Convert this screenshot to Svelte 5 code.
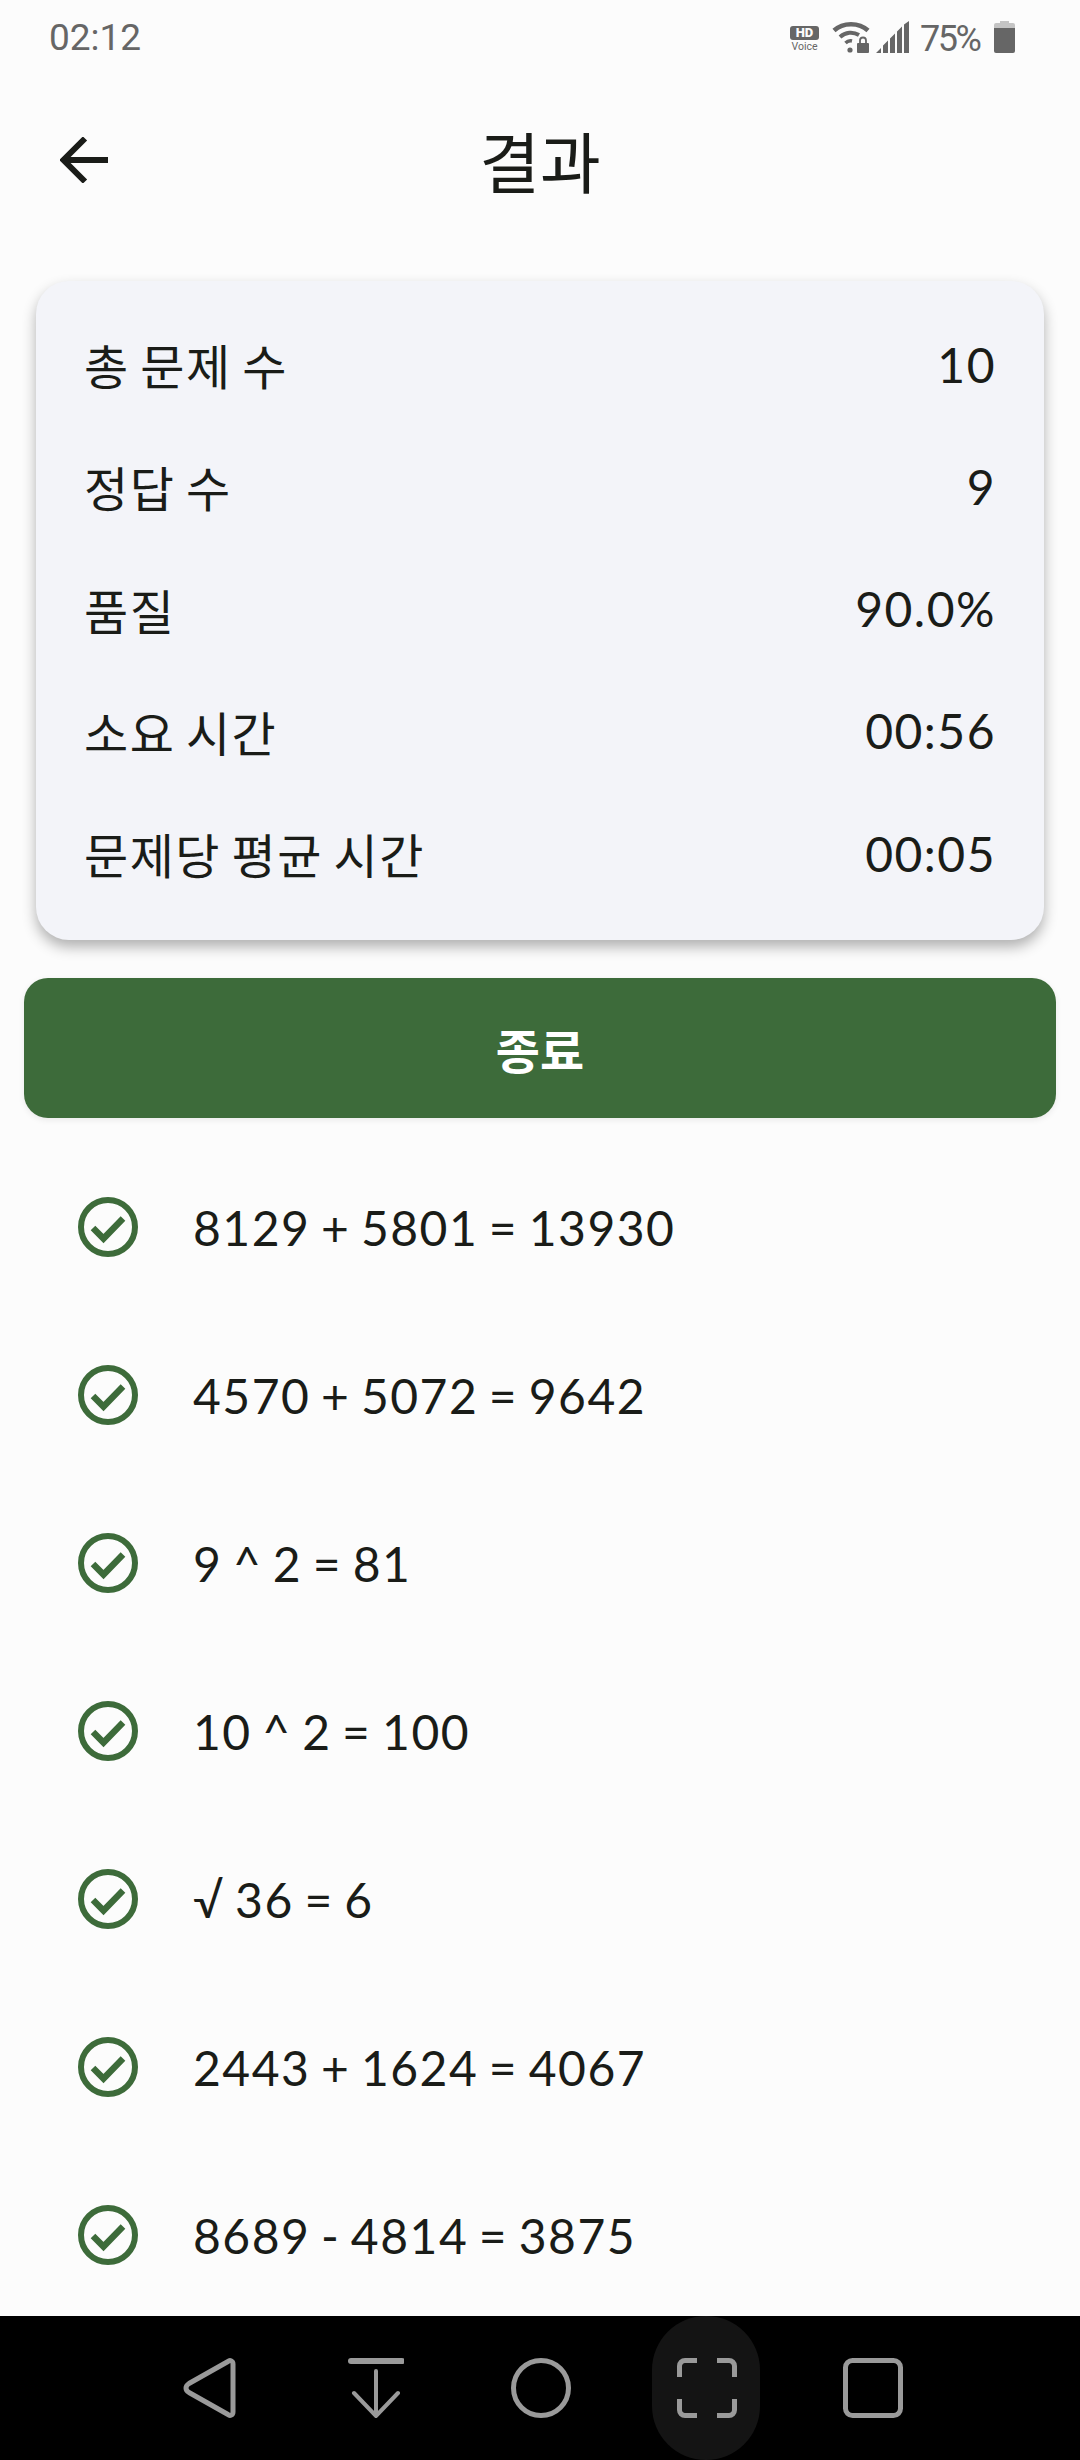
<script>
  const stats = [
    ['총 문제 수', '10'],
    ['정답 수', '9'],
    ['품질', '90.0%'],
    ['소요 시간', '00:56'],
    ['문제당 평균 시간', '00:05']
  ];
  const items = [
    '8129 + 5801 = 13930',
    '4570 + 5072 = 9642',
    '9 ^ 2 = 81',
    '10 ^ 2 = 100',
    '√ 36 = 6',
    '2443 + 1624 = 4067',
    '8689 - 4814 = 3875'
  ];
</script>

<div class="screen">
  <div class="status">
    <span class="time">02:12</span>
    <div class="sysicons">
      <div class="hd"><span class="hdbadge">HD</span><span class="voice">Voice</span></div>
      <svg class="wifi" width="38" height="32" viewBox="0 0 38 32">
        <path d="M2 9.500C11 1 27 1 36 9.500" fill="none" stroke="#666" stroke-width="4.500"/>
        <path d="M8 16C13.500 11 21 10.500 27 14" fill="none" stroke="#666" stroke-width="4"/>
        <path d="M13.500 22C15.500 20 18 19.500 20 20" fill="none" stroke="#666" stroke-width="3.500"/>
        <circle cx="18" cy="29" r="2.600" fill="#666"/>
        <rect x="25" y="22" width="12" height="10" rx="1" fill="#666"/>
        <path d="M28 22v-2.500a3 3 0 0 1 6 0V22" fill="none" stroke="#666" stroke-width="1.800"/>
      </svg>
      <svg class="signal" width="33" height="32" viewBox="0 0 33 32">
        <path d="M0 32L5 27V32Z M7 32V24.500L12 19.500V32Z M14 32V17.500L19 12.500V32Z M21 32V10.500L26 5.500V32Z M28 32V3.500L33 0V32Z" fill="#666"/>
      </svg>
      <span class="pct">75%</span>
      <svg class="batt" width="21" height="32" viewBox="0 0 21 32">
        <path d="M6 0H15V2H19A2 2 0 0 1 21 4V7H0V4A2 2 0 0 1 2 2H6Z" fill="#c4c4c4"/>
        <path d="M0 7H21V30A2 2 0 0 1 19 32H2A2 2 0 0 1 0 30Z" fill="#666"/>
      </svg>
    </div>
  </div>

  <header class="appbar">
    <svg class="back" width="48" height="46" viewBox="0 0 48 46">
      <path d="M48 23H4M25 1.500L3.500 23L25 44.500" fill="none" stroke="#1a1c18" stroke-width="6"/>
    </svg>
    <h1>결과</h1>
  </header>

  <section class="card">
    {#each stats as [label, value]}
      <div class="stat"><span>{label}</span><span>{value}</span></div>
    {/each}
  </section>

  <button class="finish">종료</button>

  <ul class="list">
    {#each items as item}
      <li>
        <svg width="60" height="60" viewBox="0 0 60 60">
          <circle cx="30" cy="30" r="27" fill="none" stroke="#3d6b3a" stroke-width="6"/>
          <path d="M15 31L25.500 41.500L45 21.500" fill="none" stroke="#3d6b3a" stroke-width="6.500"/>
        </svg>
        <span>{item}</span>
      </li>
    {/each}
  </ul>

  <nav class="nav">
    <div class="slot">
      <svg width="60" height="60" viewBox="0 0 60 60">
        <path d="M55 6C55 3 52 1.500 50 3.500L11 25.500C7 28 7 32 11 34.500L50 56.500C52 58.500 55 57 55 54Z" fill="none" stroke="#9a9a9a" stroke-width="5" stroke-linejoin="round"/>
      </svg>
    </div>
    <div class="slot">
      <svg width="60" height="60" viewBox="0 0 60 60">
        <path d="M7 3H58" fill="none" stroke="#9a9a9a" stroke-width="6" stroke-linecap="round"/>
        <path d="M32 13V57M10 35L32 58L54 35" fill="none" stroke="#9a9a9a" stroke-width="4" stroke-linecap="round"/>
      </svg>
    </div>
    <div class="slot">
      <svg width="60" height="60" viewBox="0 0 60 60" class="shift">
        <circle cx="30" cy="30" r="27.500" fill="none" stroke="#9a9a9a" stroke-width="5"/>
      </svg>
    </div>
    <div class="slot active">
      <svg width="60" height="60" viewBox="0 0 60 60" class="shift">
        <path d="M20 2.500H8A5.500 5.500 0 0 0 2.500 8V19M40 2.500H52A5.500 5.500 0 0 1 57.500 8V19M20 57.500H8A5.500 5.500 0 0 1 2.500 52V41M40 57.500H52A5.500 5.500 0 0 0 57.500 52V41" fill="none" stroke="#9a9a9a" stroke-width="5"/>
      </svg>
    </div>
    <div class="slot">
      <svg width="60" height="60" viewBox="0 0 60 60" class="shift">
        <rect x="2.500" y="2.500" width="55" height="55" rx="7" fill="none" stroke="#9a9a9a" stroke-width="5"/>
      </svg>
    </div>
  </nav>
</div>

<style>
  :global(body) {
    margin: 0;
    background: #fcfcfc;
  }
  .screen {
    width: 1080px;
    height: 2460px;
    display: flex;
    flex-direction: column;
    overflow: hidden;
    background: #fcfcfc;
    color: #1a1c18;
    font-family: Lato, "Noto Sans CJK KR", sans-serif;
  }
  .status {
    height: 78px;
    flex: none;
    display: flex;
    justify-content: space-between;
    align-items: flex-start;
    padding: 16px 65px 0 49px;
    box-sizing: border-box;
    font-family: Roboto, sans-serif;
    color: #666;
  }
  .time {
    font-size: 37px;
    line-height: 44px;
  }
  .sysicons {
    display: flex;
    align-items: flex-start;
    margin-top: 5px;
  }
  .hd {
    width: 29px;
    margin-top: 5px;
    margin-right: 13px;
    display: flex;
    flex-direction: column;
    align-items: center;
  }
  .hdbadge {
    width: 29px;
    height: 14px;
    border-radius: 3px;
    background: #666;
    color: #fcfcfc;
    font-size: 13px;
    line-height: 14px;
    font-weight: 900;
    text-align: center;
  }
  .voice {
    font-size: 10.500px;
    line-height: 12px;
    margin-top: 1px;
  }
  .wifi { margin-right: 6px; }
  .signal { margin-right: 11px; }
  .pct {
    width: 60px;
    margin-right: 14px;
    font-size: 36px;
    line-height: 36px;
    letter-spacing: -2.500px;
    white-space: nowrap;
  }
  .appbar {
    position: relative;
    flex: none;
    height: 112px;
    margin-top: 26px;
    display: flex;
    align-items: center;
    justify-content: center;
  }
  .back {
    position: absolute;
    left: 60px;
    top: 33px;
  }
  h1 {
    margin: 6px 0 0;
    font-size: 66px;
    font-weight: 400;
    line-height: 106px;
  }
  .card {
    flex: none;
    margin: 65px 36px 0;
    padding: 22px 48px 26px 48px;
    height: 659px;
    box-sizing: border-box;
    border-radius: 33px;
    background: #f3f4f9;
    box-shadow: 0 7px 14px rgba(0, 0, 0, 0.3);
    display: flex;
    flex-direction: column;
    justify-content: space-between;
  }
  .stat {
    display: flex;
    justify-content: space-between;
    align-items: center;
    height: 122px;
    font-size: 48px;
    letter-spacing: 1.500px;
    word-spacing: -3.200px;
  }
  .finish {
    flex: none;
    display: block;
    margin: 38px 24px 0;
    width: 1032px;
    height: 140px;
    border: 0;
    padding: 0;
    border-radius: 24px;
    background: #3d6b3a;
    color: #fff;
    font-family: inherit;
    font-size: 48px;
    font-weight: 700;
    box-shadow: 0 2px 6px rgba(0, 0, 0, 0.08);
  }
  .list {
    flex: 1;
    min-height: 0;
    overflow: hidden;
    list-style: none;
    margin: 25px 0 0;
    padding: 0;
  }
  .list li {
    height: 168px;
    display: flex;
    align-items: center;
    padding-left: 78px;
    gap: 55px;
    font-size: 48px;
    letter-spacing: 1.500px;
    word-spacing: -3.200px;
  }
  .nav {
    flex: none;
    height: 144px;
    background: #000;
    display: grid;
    grid-template-columns: repeat(5, 166px);
    justify-content: center;
  }
  .slot {
    display: flex;
    align-items: center;
    justify-content: center;
  }
  .shift {
    position: relative;
    left: 1px;
  }
  .active {
    width: 108px;
    justify-self: center;
    border-radius: 54px;
    background: #141414;
  }
</style>
